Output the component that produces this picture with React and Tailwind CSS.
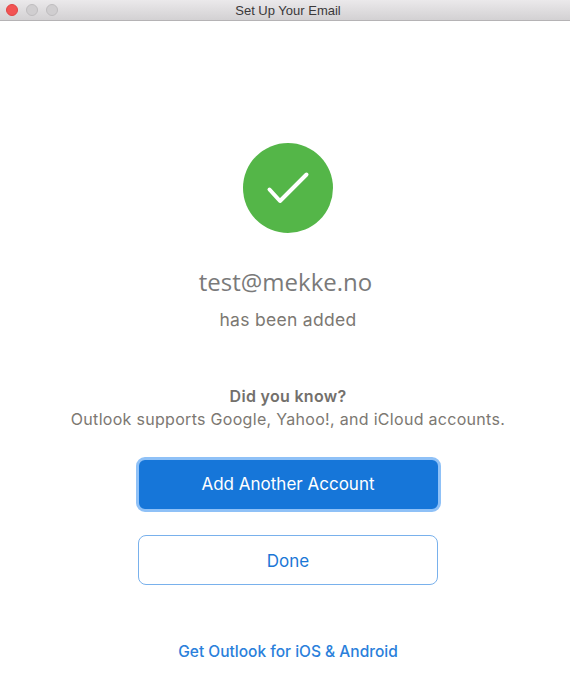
const App = () => {
  return (
    <div className="w-[570px] h-[693px] bg-white flex flex-col font-['Inter','Liberation_Sans',sans-serif] overflow-hidden">
      {/* Title bar */}
      <div className="relative h-[21px] shrink-0 flex items-center justify-center pl-[6px] bg-gradient-to-b from-[#ebe9eb] to-[#d3d1d3] border-b border-[#b5b3b5]">
        <div className="absolute left-[6px] top-[4px] flex gap-2">
          <span className="w-3 h-3 rounded-full bg-[#f25353] border border-[#e04444]" />
          <span className="w-3 h-3 rounded-full bg-[#d0ced0] border border-[#bfbdbf]" />
          <span className="w-3 h-3 rounded-full bg-[#d0ced0] border border-[#bfbdbf]" />
        </div>
        <span className="text-[13px] text-[#3a383a] font-['Liberation_Sans',sans-serif] leading-none">Set Up Your Email</span>
      </div>

      <div className="flex flex-col items-center pt-[122px] pl-[6px]">
        <div className="w-[90px] h-[90px] rounded-full bg-[#54b648]">
          <svg width="90" height="90" viewBox="0 0 90 90" fill="none">
            <path d="M26.500 46.500L37 58L63.500 31.500" stroke="white" strokeWidth="4" strokeLinecap="round" strokeLinejoin="round" />
          </svg>
        </div>

        <p className="mt-[31px] mr-[5px] text-[24px] leading-[36px] text-[#7a7a7a] font-['Open_Sans',sans-serif]">test@mekke.no</p>
        <p className="mt-[8px] text-[17.500px] leading-[24px] tracking-[0.3px] text-[#7c7872]">has been added</p>

        <p className="mt-[53px] text-[16px] leading-[22px] tracking-[0.3px] font-semibold text-[#73706c]">Did you know?</p>
        <p className="mt-[1px] text-[16px] leading-[22px] text-[#7c7872] tracking-[0.3px]">Outlook supports Google, Yahoo!, and iCloud accounts.</p>

        <button className="mt-[27px] w-[305px] h-[55px] pt-[1px] rounded-[9px] bg-[#1676d9] border-[3px] border-[#8fc1f7] text-white text-[17px]">
          Add Another Account
        </button>
        <button className="mt-[23px] w-[300px] h-[50px] pt-[3px] rounded-[8px] bg-white border border-[#79b1ec] text-[#1b77d6] text-[17px]">
          Done
        </button>
        <a className="mt-[55px] text-[15.500px] leading-[24px] font-medium text-[#2a80db]">Get Outlook for iOS &amp; Android</a>
      </div>
    </div>
  );
};

export default App;
